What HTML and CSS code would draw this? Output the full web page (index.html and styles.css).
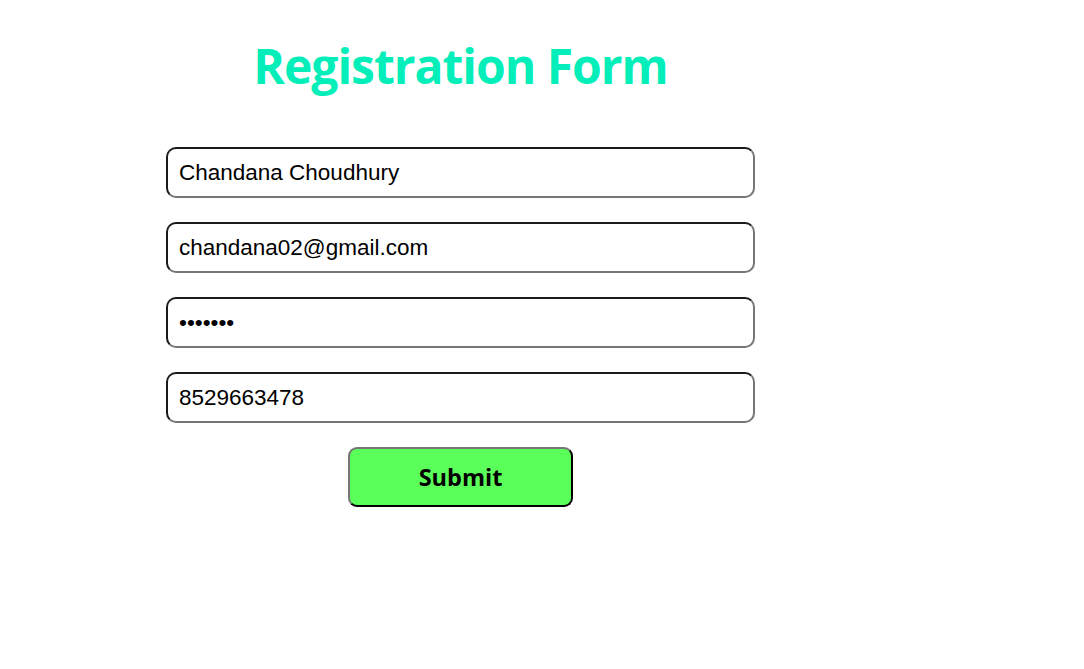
FILE: index.html
```html
<!DOCTYPE html>
<html>
<head>
<meta charset="utf-8">
<link rel="stylesheet" href="styles.css">
</head>
<body>
<div class="wrap">
  <h1 class="title">Registration Form</h1>
  <form class="form">
    <input class="field" type="text" value="Chandana Choudhury">
    <input class="field" type="email" value="chandana02@gmail.com">
    <input class="field" type="password" value="1234567">
    <input class="field" type="text" value="8529663478">
    <button class="submit" type="button">Submit</button>
  </form>
</div>
</body>
</html>
```

FILE: styles.css
```css
html, body {
  margin: 0;
  padding: 0;
  background: #ffffff;
}
.wrap {
  width: 589px;
  margin-left: 166px;
  display: flex;
  flex-direction: column;
  align-items: center;
}
.title {
  font-family: "Open Sans", sans-serif;
  font-weight: 700;
  font-size: 48px;
  letter-spacing: -1px;
  color: #03eeb9;
  margin: 24px 0 0 0;
  line-height: 84px;
}
.form {
  width: 100%;
  margin-top: 39px;
  display: flex;
  flex-direction: column;
  align-items: center;
  gap: 24px;
}
.field {
  box-sizing: border-box;
  width: 589px;
  height: 51px;
  border: 2px solid;
  border-top-color: #1a1a1a;
  border-left-color: #1a1a1a;
  border-right-color: #767676;
  border-bottom-color: #767676;
  border-radius: 10px;
  padding: 0 11px;
  font-family: "Liberation Sans", Arial, sans-serif;
  font-size: 22.5px;
  color: #000;
  background: #fff;
  outline: none;
}
.submit {
  box-sizing: border-box;
  width: 225px;
  height: 60px;
  border: 2px solid;
  border-top-color: #767676;
  border-left-color: #767676;
  border-right-color: #000;
  border-bottom-color: #000;
  border-radius: 9px;
  background: #5aff5a;
  font-family: "Open Sans", sans-serif;
  font-weight: 700;
  font-size: 23.5px;
  color: #000;
}
```
